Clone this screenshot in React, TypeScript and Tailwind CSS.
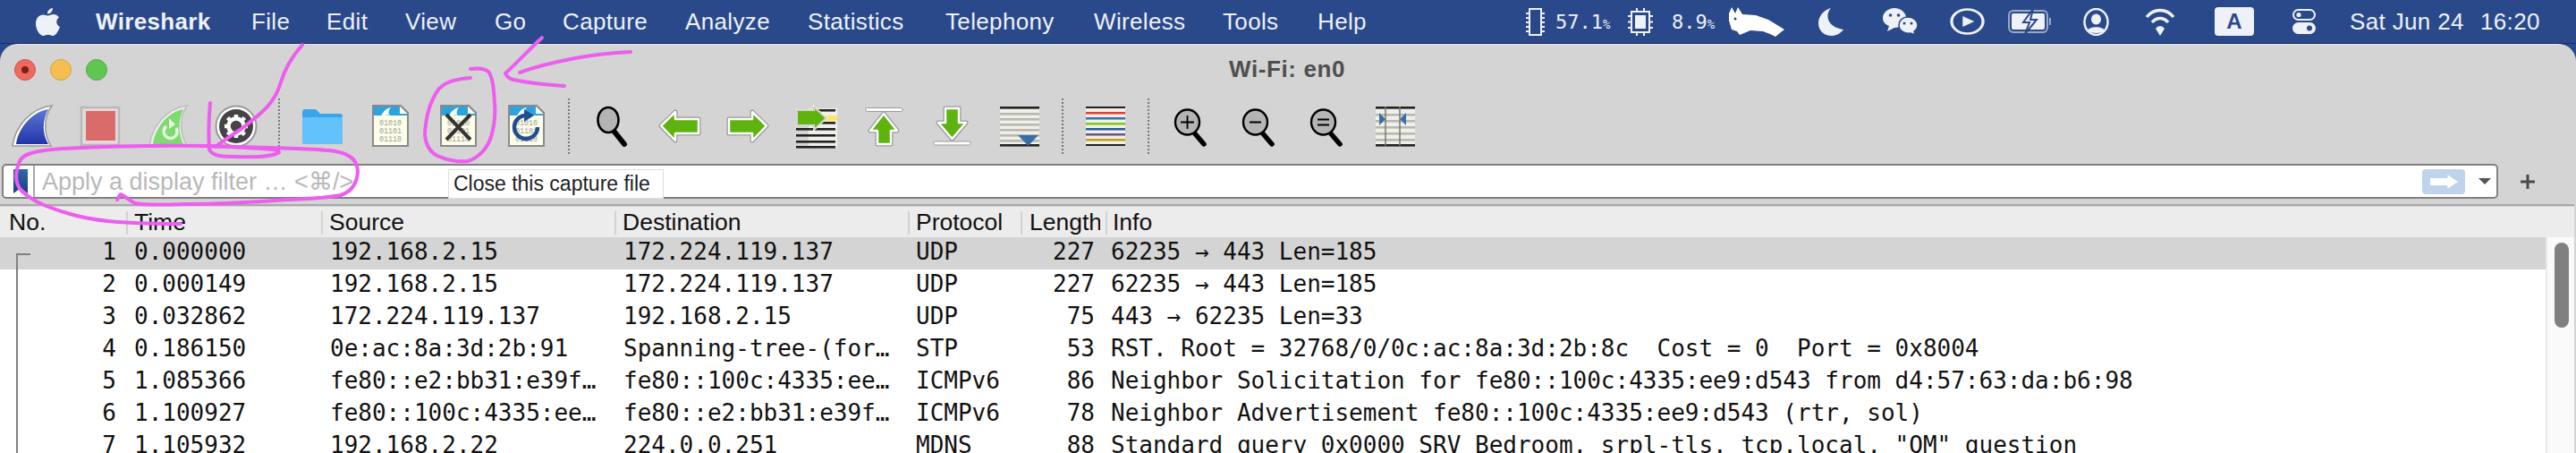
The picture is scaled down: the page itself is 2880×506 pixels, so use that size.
import React from "react";

const menus = [
  ["Wireshark", "w-[174px] font-bold"],
  ["File", "w-[84px]"],
  ["Edit", "w-[88px]"],
  ["View", "w-[100px]"],
  ["Go", "w-[76px]"],
  ["Capture", "w-[137px]"],
  ["Analyze", "w-[137px]"],
  ["Statistics", "w-[154px]"],
  ["Telephony", "w-[166px]"],
  ["Wireless", "w-[144px]"],
  ["Tools", "w-[106px]"],
  ["Help", "w-[60px]"],
];

const rows = [
  ["1", "0.000000", "192.168.2.15", "172.224.119.137", "UDP", "227", "62235 → 443 Len=185"],
  ["2", "0.000149", "192.168.2.15", "172.224.119.137", "UDP", "227", "62235 → 443 Len=185"],
  ["3", "0.032862", "172.224.119.137", "192.168.2.15", "UDP", "75", "443 → 62235 Len=33"],
  ["4", "0.186150", "0e:ac:8a:3d:2b:91", "Spanning-tree-(for…", "STP", "53", "RST. Root = 32768/0/0c:ac:8a:3d:2b:8c  Cost = 0  Port = 0x8004"],
  ["5", "1.085366", "fe80::e2:bb31:e39f…", "fe80::100c:4335:ee…", "ICMPv6", "86", "Neighbor Solicitation for fe80::100c:4335:ee9:d543 from d4:57:63:da:b6:98"],
  ["6", "1.100927", "fe80::100c:4335:ee…", "fe80::e2:bb31:e39f…", "ICMPv6", "78", "Neighbor Advertisement fe80::100c:4335:ee9:d543 (rtr, sol)"],
  ["7", "1.105932", "192.168.2.22", "224.0.0.251", "MDNS", "88", "Standard query 0x0000 SRV Bedroom._srpl-tls._tcp.local, \"QM\" question"],
];

const Ico = ({ children }: { children: React.ReactNode }) => (
  <div className="w-[76px] h-[72px] flex items-center justify-center shrink-0">
    <svg viewBox="0 0 48 48" className="w-12 h-12 overflow-visible">{children}</svg>
  </div>
);
const Sep = () => (
  <div className="w-5 h-[62px] shrink-0 flex justify-center">
    <div className="h-full border-l-2 border-dotted border-[#777]" />
  </div>
);

const Doc = ({ children }: { children?: React.ReactNode }) => (
  <>
    <path d="M5 1H36L44 9V46H5Z" fill="#fdfde8" stroke="#8a8a8a" strokeWidth="2" />
    <path d="M6 2H35V12H6Z" fill="#2ba3dd" />
    <path d="M35 2L43 10V12H35Z" fill="#2ba3dd" />
    <path d="M35 2L43 10H35Z" fill="#fff" />
    <path d="M14 14C15 8 20 4 25 3C22 7 22 10 24 12C20 11 17 12 14 14Z" fill="#fff" />
    <g fontFamily="'Liberation Mono', monospace" fontSize="8.4" fill="#a0a0a0">
      <text x="12" y="23">01010</text>
      <text x="12" y="32">01101</text>
      <text x="12" y="41">01110</text>
    </g>
    {children}
  </>
);

const Arrow = ({ d }: { d: string }) => (
  <>
    <path d={d} fill="none" stroke="#9a9a9a" strokeWidth="5" strokeLinejoin="round" />
    <path d={d} fill="#5fb30f" stroke="#fff" strokeWidth="2.5" strokeLinejoin="round" />
  </>
);

const Glass = ({ children }: { children?: React.ReactNode }) => (
  <>
    <path d="M26 30L38 44" stroke="#000" strokeWidth="5.500" strokeLinecap="round" />
    <ellipse cx="19.500" cy="19.500" rx="13.500" ry="14" fill="#b4b4b4" stroke="#000" strokeWidth="2.400" />
    {children}
  </>
);

const Stripes = ({ ys, color }: { ys: number[]; color: string }) => (
  <>
    {ys.map((y) => (
      <rect key={y} x="2" y={y} width="44" height="2.6" fill={color} />
    ))}
  </>
);

export default function App() {
  return (
    <div className="relative w-[2880px] h-[506px] overflow-hidden flex flex-col bg-[#29498b] font-['Liberation_Sans',Arial,sans-serif]">
      {/* macOS menu bar */}
      <div className="h-[49px] shrink-0 flex items-center text-[26px] tracking-[0.35px] text-[#eef1f7] border-b border-[#1b2f5c]">
        <svg viewBox="0 0 28 33" className="w-7 h-[33px] ml-[39px] mr-[40px] shrink-0" fill="#eef1f7">
          <path d="M20 1C20 4 17.500 7.500 14 7.500C14 4 16.500 1.500 20 1ZM14.500 9.500C16 9.500 18 8 21 8C23 8 25.500 9 27 11.500C23 14 23.500 20 28 22C26.500 26 23.500 32 20 32C18 32 17 30.800 14.700 30.800C12.400 30.800 11.400 32 9.500 32C5.500 32 1 25 1 18.500C1 12 5 8.500 9 8.500C11.300 8.500 13 9.500 14.500 9.500Z" />
        </svg>
        {menus.map(([label, cls]) => (
          <span key={label} className={`${cls} shrink-0 whitespace-nowrap`}>{label}</span>
        ))}
        <div className="ml-auto mr-[38px] flex items-center shrink-0">
          <svg viewBox="0 0 21 31" className="w-[21px] h-[31px]" fill="none" stroke="#eef1f7" strokeWidth="2">
            <rect x="4" y="1" width="13" height="29" />
            <path d="M0 6H4M0 11H4M0 16H4M0 21H4M0 26H4M17 6H21M17 11H21M17 16H21M17 21H21M17 26H21" />
          </svg>
          <span className="ml-3 w-[71px] flex items-baseline whitespace-nowrap font-['DejaVu_Sans_Mono',monospace] text-[22px] tracking-normal">57.1<span className="text-[14px] tracking-[-1px]">%</span></span>
          <svg viewBox="0 0 28 31" className="ml-[10px] w-7 h-[31px]" fill="none" stroke="#eef1f7" strokeWidth="2">
            <rect x="4" y="4" width="20" height="23" />
            <rect x="8" y="8" width="12" height="15" fill="#eef1f7" stroke="none" />
            <path d="M0 9H4M0 15.500H4M0 22H4M24 9H28M24 15.500H28M24 22H28M10 0V4M18 0V4M10 27V31M18 27V31" />
          </svg>
          <span className="ml-[21px] w-[57px] flex items-baseline whitespace-nowrap font-['DejaVu_Sans_Mono',monospace] text-[22px] tracking-normal">8.9<span className="text-[14px] tracking-[-1px]">%</span></span>
          <svg viewBox="0 0 67 33" className="ml-[7px] w-[67px] h-[33px]" fill="#fff">
            <path d="M3 0L7 7L10 0L15 8L30 9L44 14L54 20L62 25L58 28L52 33L46 30L38 27L24 26L12 31L9 27L3 25L0 15L0 7Z" />
            <circle cx="7" cy="13" r="1.500" fill="#29498b" />
          </svg>
          <svg viewBox="0 0 29 31" className="ml-[33px] w-[29px] h-[31px]" fill="#eef1f7">
            <path d="M14 0C8 6 8 21 28 24C24 29 19 31 15 31C6 31 0 25 0 17C0 9 6 2 14 0Z" />
          </svg>
          <svg viewBox="0 0 41 32" className="ml-[42px] w-[41px] h-8">
            <path d="M14 1C21 1 27 6 27 12C27 18 21 23 14 23L6 27L8 21C3 19 1 16 1 12C1 6 7 1 14 1Z" fill="#eef1f7" />
            <circle cx="9.500" cy="9" r="1.800" fill="#29498b" />
            <circle cx="18.500" cy="9" r="1.800" fill="#29498b" />
            <path d="M29 11C35 11 40 15 40 20C40 23 38 25.500 36 27L37 31L32 29C25 30 19 26 19 20C19 15 23 11 29 11Z" fill="#eef1f7" stroke="#29498b" strokeWidth="1.500" />
            <circle cx="25" cy="18" r="1.500" fill="#29498b" />
            <circle cx="33" cy="18" r="1.500" fill="#29498b" />
          </svg>
          <svg viewBox="0 0 30 30" className="ml-[35px] w-[39px] h-[30px]" preserveAspectRatio="none">
            <circle cx="15" cy="15" r="13.500" fill="none" stroke="#eef1f7" strokeWidth="2.500" />
            <path d="M11 9L21 15L11 21Z" fill="#eef1f7" />
          </svg>
          <svg viewBox="0 0 49 28" className="ml-[26px] w-[49px] h-7">
            <rect x="1" y="2" width="43" height="24" rx="5" fill="none" stroke="#9aa9c9" strokeWidth="2" />
            <rect x="46" y="10" width="2" height="8" fill="#9aa9c9" />
            <rect x="4" y="5" width="37" height="18" rx="2" fill="#eef1f7" />
            <path d="M28 0L17 15H24L19 28L32 12H25Z" fill="#eef1f7" stroke="#29498b" strokeWidth="2" />
          </svg>
          <svg viewBox="0 0 29 31" className="ml-[35px] w-[29px] h-[31px]" fill="#eef1f7">
            <ellipse cx="14.500" cy="15.500" rx="13" ry="14.500" fill="none" stroke="#eef1f7" strokeWidth="2.500" />
            <ellipse cx="14.500" cy="12.500" rx="5.500" ry="6" />
            <path d="M5 25C7 20 22 20 24 25C21 29 8 29 5 25Z" />
          </svg>
          <svg viewBox="0 0 34 32" className="ml-[40px] w-[34px] h-8" fill="none" stroke="#eef1f7" strokeWidth="3.500">
            <path d="M2 11C10 1 24 1 32 11" />
            <path d="M8 17C13 11 21 11 26 17" />
            <path d="M12 24L17 32L22 24C19 20 15 20 12 24Z" fill="#eef1f7" stroke="none" />
          </svg>
          <div className="ml-[44px] w-11 h-8 rounded-[4px] bg-[#eef1f7] flex items-center justify-center text-[#29498b] font-bold text-[24px]">A</div>
          <svg viewBox="0 0 28 30" className="ml-[42px] w-7 h-[30px]">
            <rect x="2" y="2" width="24" height="11" rx="5.500" fill="none" stroke="#eef1f7" strokeWidth="2" />
            <circle cx="8" cy="7.500" r="2.600" fill="#eef1f7" />
            <rect x="1" y="16" width="26" height="13" rx="6.500" fill="#eef1f7" />
            <circle cx="20" cy="22.500" r="3" fill="#29498b" />
          </svg>
          <span className="ml-[37px] w-[128px] whitespace-nowrap">Sat Jun 24</span>
          <span className="ml-[18px] w-[69px] whitespace-nowrap">16:20</span>
        </div>
      </div>

      {/* Window */}
      <div className="flex-1 min-h-0 flex flex-col rounded-t-[20px] bg-[#d4d4d4] border-t border-[#e8e8e8] overflow-hidden">
        <div className="h-[55px] shrink-0 flex items-center">
          <div className="ml-4 flex gap-4">
            <div className="w-6 h-6 rounded-full bg-[#ee6a5f] border border-[#d0534a] flex items-center justify-center">
              <div className="w-2 h-2 rounded-full bg-[#7c1f18]" />
            </div>
            <div className="w-6 h-6 rounded-full bg-[#f5bf4f] border border-[#d6a243]" />
            <div className="w-6 h-6 rounded-full bg-[#61c554] border border-[#52a94a]" />
          </div>
          <div className="ml-[1253px] w-[132px] text-center whitespace-nowrap text-[#4f4f4f] font-bold text-[26px] tracking-[0.6px]">Wi-Fi: en0</div>
        </div>

        {/* Toolbar */}
        <div className="h-[72px] shrink-0 flex items-center -ml-0.5">
          <Ico>
            <defs>
              <linearGradient id="fin" x1="0" y1="0" x2="0" y2="1">
                <stop offset="0" stopColor="#5c78d4" />
                <stop offset="1" stopColor="#2135a8" />
              </linearGradient>
            </defs>
            <path d="M2 46C5 24 22 4 46 1C36 15 37 33 45 46Z" fill="#fff" stroke="#999" strokeWidth="1.500" />
            <path d="M6 44C9 25 24 8 42 5C35 18 35 32 42 44Z" fill="url(#fin)" />
          </Ico>
          <Ico>
            <rect x="3" y="3" width="42" height="42" fill="#e2dcdc" stroke="#b9b9b9" strokeWidth="2.500" />
            <rect x="8" y="7" width="33" height="33" fill="#d96b6b" />
          </Ico>
          <Ico>
            <path d="M3 46C6 24 22 4 45 1C36 15 37 33 45 46Z" fill="#ececec" stroke="#bdbdbd" strokeWidth="1.500" />
            <path d="M7 44C10 25 24 8 41 5C35 18 35 32 41 44Z" fill="#7ddb70" />
            <path d="M22 24A7.500 7.500 0 1 0 33 26" fill="none" stroke="#e6f5e0" strokeWidth="3.500" />
            <path d="M25 15L32 22L25 27Z" fill="#e6f5e0" />
          </Ico>
          <Ico>
            <circle cx="24" cy="24" r="22.500" fill="#fff" stroke="#9a9a9a" strokeWidth="2" />
            <circle cx="24" cy="24" r="19" fill="#444" />
            <circle cx="24" cy="24" r="8.500" fill="none" stroke="#fff" strokeWidth="4.500" />
            <path d="M24 11V15M24 33V37M11 24H15M33 24H37M14.500 14.500L17.500 17.500M30.500 30.500L33.500 33.500M33.500 14.500L30.500 17.500M17.500 30.500L14.500 33.500" stroke="#fff" strokeWidth="4.500" />
          </Ico>
          <Sep />
          <Ico>
            <path d="M2 9C2 6.500 3 5 5 5H17L22 10H44C46 10 47 11 47 13V41C47 43 46 44 44 44H5C3 44 2 43 2 41Z" fill="#3aa4e8" />
            <path d="M2 14H47V41C47 43 46 44 44 44H5C3 44 2 43 2 41Z" fill="#63c2fb" />
          </Ico>
          <Ico><Doc /></Ico>
          <Ico>
            <Doc>
              <path d="M11 11L38 39M38 11L11 39" stroke="#333" strokeWidth="4" />
            </Doc>
          </Ico>
          <Ico>
            <Doc>
              <path d="M24 12A13 13 0 1 0 37 25" fill="none" stroke="#1f4f8f" strokeWidth="4.500" />
              <path d="M22 5L33 12L22 19Z" fill="#1f4f8f" />
            </Doc>
          </Ico>
          <Sep />
          <Ico>
            <path d="M26 29L38 44" stroke="#000" strokeWidth="6" strokeLinecap="round" />
            <ellipse cx="20" cy="17" rx="11.500" ry="14" fill="#b4b4b4" stroke="#000" strokeWidth="2.600" />
          </Ico>
          <Ico><Arrow d="M3 23.500L19 8V16H45V32H19V40Z" /></Ico>
          <Ico><Arrow d="M45 23.500L29 8V16H3V32H29V40Z" /></Ico>
          <Ico>
            <rect x="16" y="4" width="32" height="44" fill="#f0f0ea" />
            <Stripes ys={[5, 19, 26, 33, 40, 46]} color="#222" />
            <rect x="26" y="12" width="22" height="6" fill="#ffe566" />
            <path d="M3 6H22V2L36 15L22 28V23H3Z" fill="#5fb30f" stroke="#fff" strokeWidth="2" />
            <path d="M3 6H22V2L36 15L22 28V23H3Z" fill="none" stroke="#999" strokeWidth="0.800" />
          </Ico>
          <Ico>
            <rect x="4" y="3.500" width="41" height="4" rx="1.500" fill="#fff" stroke="#999" />
            <Arrow d="M24 10L39 29H32V44H17V29H9Z" />
          </Ico>
          <Ico>
            <rect x="4" y="41" width="41" height="4" rx="1.500" fill="#fff" stroke="#999" />
            <Arrow d="M17 4H32V20H40L24.500 38L9 20H17Z" />
          </Ico>
          <Ico>
            <rect x="2" y="2" width="44" height="44" fill="#f0f0ea" />
            <Stripes ys={[2, 44]} color="#222" />
            <Stripes ys={[9, 15, 21, 27, 33, 39]} color="#b8b8b0" />
            <path d="M22 34H45L33.500 46Z" fill="#3a6ea8" />
          </Ico>
          <Sep />
          <Ico>
            <rect x="2" y="2" width="44" height="44" fill="#f0f0ea" />
            <rect x="2" y="2" width="44" height="2" fill="#222" />
            <rect x="2" y="8" width="44" height="2.500" fill="#e43a3a" />
            <rect x="2" y="14" width="44" height="2.500" fill="#3a6ea8" />
            <rect x="2" y="20" width="44" height="2.500" fill="#7cc818" />
            <rect x="2" y="26" width="44" height="2.500" fill="#2a5a9c" />
            <rect x="2" y="32" width="44" height="2.500" fill="#6d4f8a" />
            <rect x="2" y="38" width="44" height="2.500" fill="#c49f10" />
            <rect x="2" y="44" width="44" height="2" fill="#222" />
          </Ico>
          <Sep />
          <Ico>
            <Glass>
              <path d="M12 19.500H27M19.500 12V27" stroke="#000" strokeWidth="1.800" />
            </Glass>
          </Ico>
          <Ico>
            <Glass>
              <path d="M13 19.500H26" stroke="#000" strokeWidth="2" />
            </Glass>
          </Ico>
          <Ico>
            <Glass>
              <path d="M13 16.500H26M13 22.500H26" stroke="#000" strokeWidth="2" />
            </Glass>
          </Ico>
          <Ico>
            <rect x="2" y="2" width="44" height="44" fill="#f0f0ea" />
            <Stripes ys={[2, 44]} color="#222" />
            <Stripes ys={[10, 17, 24, 31, 38]} color="#b8b8b0" />
            <path d="M13 2V46M29 2V46" stroke="#777" strokeWidth="1.500" />
            <path d="M6 9L13 16L6 23Z" fill="#3a6ea8" />
            <path d="M36 9L29 16L36 23Z" fill="#3a6ea8" />
          </Ico>
        </div>

        {/* Filter bar */}
        <div className="h-[39px] mt-[6px] shrink-0 flex items-center">
          <div className="ml-0.5 w-[2791px] h-[39px] bg-white border-2 border-[#808080] rounded-[5px] flex items-center overflow-hidden">
            <div className="w-[35px] h-full shrink-0 border-r-2 border-[#a8a8a8] flex items-center justify-center">
              <svg viewBox="0 0 16 27" className="w-4 h-[27px] ml-1">
                <defs>
                  <linearGradient id="mark" x1="0" y1="0" x2="0" y2="1">
                    <stop offset="0" stopColor="#2f68b0" />
                    <stop offset="1" stopColor="#163f80" />
                  </linearGradient>
                </defs>
                <path d="M0 0H16V27L8 21L0 27Z" fill="url(#mark)" />
              </svg>
            </div>
            <span className="ml-2 mt-0.5 text-[27px] text-[#b8b8b8] whitespace-nowrap font-['Liberation_Sans','DejaVu_Sans',sans-serif]">Apply a display filter … &lt;⌘/&gt;</span>
            <div className="ml-auto w-12 h-7 rounded-[4px] bg-[#bfd3ea] flex items-center justify-center">
              <svg viewBox="0 0 34 16" className="w-[33px] h-4"><path d="M1 4H21V0L33 8L21 16V12H1Z" fill="#fff" /></svg>
            </div>
            <svg viewBox="0 0 14 7" className="ml-[15px] mr-[6px] w-[14px] h-[7px] shrink-0"><path d="M0 0H14L7 7Z" fill="#555" /></svg>
          </div>
          <svg viewBox="0 0 16 16" className="ml-[25px] w-4 h-4 shrink-0"><path d="M6.500 0H9.500V6.500H16V9.500H9.500V16H6.500V9.500H0V6.500H6.500Z" fill="#4a4a4a" /></svg>
        </div>

        {/* Packet list */}
        <div className="mt-[6px] mr-0.5 flex-1 min-h-0 border-t-2 border-[#a8a8a8] pt-px flex flex-col text-[#111]">
          <div className="h-[34px] shrink-0 flex items-center bg-[#ececec] text-[26.5px] whitespace-nowrap pt-0.5">
            <div className="w-[141px] shrink-0 h-[26px] pl-2.5 flex items-center">No.</div>
            <div className="w-[218px] shrink-0 h-[26px] pl-[7px] flex items-center border-l-2 border-[#d2d2d2]">Time</div>
            <div className="w-[328px] shrink-0 h-[26px] pl-[7px] flex items-center border-l-2 border-[#d2d2d2]">Source</div>
            <div className="w-[328px] shrink-0 h-[26px] pl-[7px] flex items-center border-l-2 border-[#d2d2d2]">Destination</div>
            <div className="w-[126px] shrink-0 h-[26px] pl-[7px] flex items-center border-l-2 border-[#d2d2d2]">Protocol</div>
            <div className="w-[95px] shrink-0 h-[26px] pl-2 flex items-center border-l-2 border-[#d2d2d2]">
              <span className="block w-[79px] overflow-hidden">Length</span>
            </div>
            <div className="flex-1 h-[26px] pl-1.5 flex items-center border-l-2 border-[#d2d2d2]">Info</div>
          </div>
          <div className="relative flex-1 min-h-0 flex bg-white">
            <div className="w-[2846px] shrink-0 font-['DejaVu_Sans_Mono',monospace] text-[26px] leading-[32px] whitespace-pre">
              {rows.map((r, i) => (
                <div key={r[0]} className={`h-9 flex ${i === 0 ? "bg-[#d4d4d4]" : "bg-white"}`}>
                  <div className="w-[130px] shrink-0 text-right">{r[0]}</div>
                  <div className="w-[239px] shrink-0 pl-5">{r[1]}</div>
                  <div className="w-[328px] shrink-0">{r[2]}</div>
                  <div className="w-[327px] shrink-0">{r[3]}</div>
                  <div className="w-[125px] shrink-0">{r[4]}</div>
                  <div className="w-[75px] shrink-0 text-right">{r[5]}</div>
                  <div className="flex-1 pl-[18px]">{r[6]}</div>
                </div>
              ))}
            </div>
            <div className="flex-1 bg-[#fafafa] border-l-2 border-[#e8e8e8] pl-2 pt-1.5">
              <div className="w-4 h-[95px] rounded-full bg-[#808080]" />
            </div>
            <div className="absolute left-[18px] top-[18px] w-4 h-[240px] border-l-2 border-t-2 border-[#808080]" />
          </div>
        </div>
      </div>

      {/* Tooltip */}
      <div className="absolute left-[501px] top-[189px] w-[241px] h-[33px] bg-white border border-[#dedede] flex items-center pl-[5px] text-[23px] text-[#222] whitespace-nowrap">Close this capture file</div>

      {/* Hand-drawn annotations */}
      <svg className="absolute left-0 top-0 pointer-events-none" width="2880" height="506" viewBox="0 0 2880 506" fill="none" stroke="#ee5cf0" strokeWidth="4" strokeLinecap="round" strokeLinejoin="round">
        <path d="M338 50C325 65 318 78 314 92C306 118 290 128 271 143C258 152 248 158 241 164" />
        <path d="M235 115C233 135 233 150 234 167C238 175 250 175 262 175C285 176 305 175 312 170C312 166 280 165 230 163C170 162 110 164 70 166C40 168 25 172 22 180C17 192 16 205 25 214C38 226 55 232 75 238C100 246 130 250 202 250" />
        <path d="M230 163C280 165 350 165 375 169C392 172 400 180 400 192C399 205 393 214 381 218C360 222 340 222 321 223C285 226 240 228 207 228C180 229 160 229 151 227C143 223 140 219 135 217C133 219 132 221 131 223" />
        <path d="M526 87C510 88 498 91 491 99C481 112 476 130 475 150C476 162 481 170 489 174C500 179 513 181 523 180C536 176 545 165 549 153C553 140 554 128 553 115C552 100 551 86 546 80C541 76 533 76 526 77" />
        <path d="M606 42C590 57 578 70 565 82C568 88 572 89 579 90C595 93 612 95 631 96" />
        <path d="M581 81C600 74 622 69 643 65C665 61 685 59 705 58" />
      </svg>
    </div>
  );
}
